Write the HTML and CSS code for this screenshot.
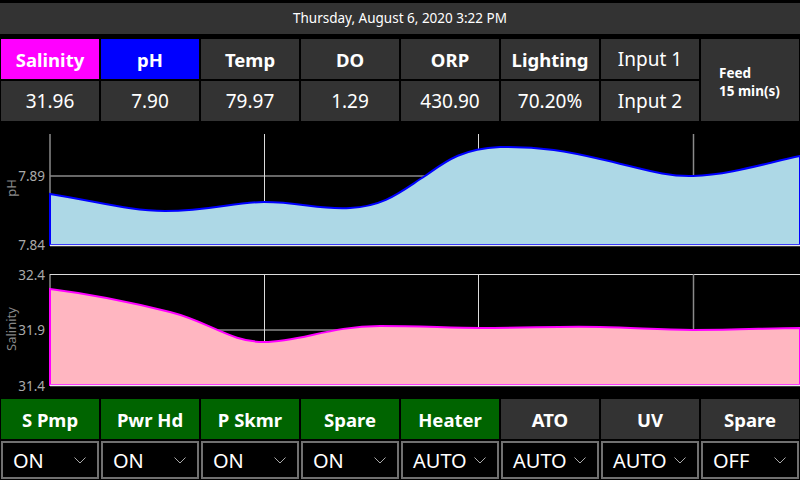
FILE: index.html
```html
<!DOCTYPE html>
<html>
<head>
<meta charset="utf-8">
<link rel="stylesheet" href="styles.css">
</head>
<body>
<div class="screen">
  <div class="header">Thursday, August 6, 2020 3:22 PM</div>

  <div class="tiles">
    <div class="tile label sal">Salinity</div>
    <div class="tile label ph">pH</div>
    <div class="tile label">Temp</div>
    <div class="tile label">DO</div>
    <div class="tile label">ORP</div>
    <div class="tile label">Lighting</div>
    <div class="tile">Input 1</div>
    <div class="tile feed"><div>Feed<br>15 min(s)</div></div>
    <div class="tile">31.96</div>
    <div class="tile">7.90</div>
    <div class="tile">79.97</div>
    <div class="tile">1.29</div>
    <div class="tile">430.90</div>
    <div class="tile">70.20%</div>
    <div class="tile">Input 2</div>
  </div>

  <div class="charts">
    <svg class="chart" width="800" height="138" viewBox="0 0 800 138">
      <text class="axis-title" transform="translate(16,66) rotate(-90)">pH</text>
      <text class="tick" x="45" y="59">7.89</text>
      <text class="tick" x="45" y="128">7.84</text>
      <line class="grid-gray" x1="50" y1="12" x2="50" y2="123"/>
      <line class="grid-gray" x1="50" y1="54" x2="800" y2="54"/>
      <line class="grid-light" x1="264.5" y1="12" x2="264.5" y2="123"/>
      <line class="grid-light" x1="478.5" y1="12" x2="478.5" y2="123"/>
      <line class="grid-gray" x1="693.5" y1="12" x2="693.5" y2="123"/>
      <path class="ph-fill" d="M50,123 L50,72 C100,80 130,89 165,89 C210,89 235,80 264,80 C300,80 320,88 350,86 C385,84 400,70 425,54 C445,40 460,27 500,25 C540,24 570,30 600,37 C640,46 665,55 693,54 C730,53 770,40 800,34 L800,123 Z"/>
      <line class="axis-bottom" x1="50" y1="123.5" x2="800" y2="123.5"/>
    </svg>
    <svg class="chart" width="800" height="138" viewBox="0 0 800 138">
      <text class="axis-title" transform="translate(16,69) rotate(-90)">Salinity</text>
      <text class="tick" x="45" y="20">32.4</text>
      <text class="tick" x="45" y="75">31.9</text>
      <text class="tick" x="45" y="131">31.4</text>
      <line class="grid-gray" x1="50" y1="14" x2="50" y2="125"/>
      <line class="grid-light" x1="50" y1="14.5" x2="800" y2="14.5"/>
      <line class="grid-gray" x1="50" y1="70" x2="800" y2="70"/>
      <line class="grid-light" x1="264.5" y1="14" x2="264.5" y2="125"/>
      <line class="grid-light" x1="478.5" y1="14" x2="478.5" y2="125"/>
      <line class="grid-gray" x1="693.5" y1="14" x2="693.5" y2="125"/>
      <path class="sal-fill" d="M50,125 L50,29 C90,34 130,42 170,52 C210,62 230,82 264,82 C300,82 330,66 380,66 C420,66 450,68 480,68 C530,68 560,66 600,67 C640,68 660,70 693,70 C740,70 770,68 800,68 L800,125 Z"/>
      <line class="axis-bottom" x1="50" y1="125.5" x2="800" y2="125.5"/>
    </svg>
  </div>

  <div class="controls">
    <div class="ctl on">S Pmp</div>
    <div class="ctl on">Pwr Hd</div>
    <div class="ctl on">P Skmr</div>
    <div class="ctl on">Spare</div>
    <div class="ctl on">Heater</div>
    <div class="ctl">ATO</div>
    <div class="ctl">UV</div>
    <div class="ctl">Spare</div>
    <div class="select"><span>ON</span><svg class="chev" width="12" height="7" viewBox="0 0 12 7"><polyline points="0.5,0.5 6,6 11.5,0.5"/></svg></div>
    <div class="select"><span>ON</span><svg class="chev" width="12" height="7" viewBox="0 0 12 7"><polyline points="0.5,0.5 6,6 11.5,0.5"/></svg></div>
    <div class="select"><span>ON</span><svg class="chev" width="12" height="7" viewBox="0 0 12 7"><polyline points="0.5,0.5 6,6 11.5,0.5"/></svg></div>
    <div class="select"><span>ON</span><svg class="chev" width="12" height="7" viewBox="0 0 12 7"><polyline points="0.5,0.5 6,6 11.5,0.5"/></svg></div>
    <div class="select"><span>AUTO</span><svg class="chev" width="12" height="7" viewBox="0 0 12 7"><polyline points="0.5,0.5 6,6 11.5,0.5"/></svg></div>
    <div class="select"><span>AUTO</span><svg class="chev" width="12" height="7" viewBox="0 0 12 7"><polyline points="0.5,0.5 6,6 11.5,0.5"/></svg></div>
    <div class="select"><span>AUTO</span><svg class="chev" width="12" height="7" viewBox="0 0 12 7"><polyline points="0.5,0.5 6,6 11.5,0.5"/></svg></div>
    <div class="select"><span>OFF</span><svg class="chev" width="12" height="7" viewBox="0 0 12 7"><polyline points="0.5,0.5 6,6 11.5,0.5"/></svg></div>
  </div>
</div>
</body>
</html>
```

FILE: styles.css
```css
html, body {
  margin: 0;
  padding: 0;
  background: #000;
}
body {
  font-family: "Noto Sans", "Open Sans", "DejaVu Sans", sans-serif;
  color: #fff;
}
.screen {
  width: 800px;
  height: 480px;
  overflow: hidden;
  display: flex;
  flex-direction: column;
}
.header {
  margin-top: 3px;
  height: 31px;
  line-height: 31px;
  background: #333;
  text-align: center;
  font-size: 13.5px;
}
.tiles {
  margin-top: 4px;
  padding: 1px;
  display: grid;
  grid-template-columns: repeat(8, 1fr);
  grid-template-rows: 40px 40px;
  gap: 2px;
}
.tile {
  background: #333;
  display: flex;
  align-items: center;
  justify-content: center;
  font-size: 19px;
}
.tile.label {
  font-weight: 700;
  font-size: 18.5px;
}
.tile.sal { background: #ff00ff; }
.tile.ph { background: #0000ff; }
.tile.feed {
  grid-column: 8;
  grid-row: 1 / span 2;
  justify-content: flex-start;
  padding-left: 18px;
  padding-top: 3px;
  font-size: 13.5px;
  font-weight: 700;
  line-height: 18px;
}
.charts {
  display: flex;
  flex-direction: column;
}
.chart {
  display: block;
}
.tick {
  fill: #aaa;
  font-size: 13.5px;
  text-anchor: end;
}
.axis-title {
  fill: #888;
  font-size: 13px;
  text-anchor: middle;
}
.grid-gray {
  stroke: #8a8a8a;
  stroke-width: 1.5;
}
.grid-light {
  stroke: #dcdcdc;
  stroke-width: 1;
}
.axis-bottom {
  stroke: #eee;
  stroke-width: 1.5;
}
.ph-fill {
  fill: #add8e6;
  stroke: #0000ff;
  stroke-width: 2;
}
.sal-fill {
  fill: #ffb6c1;
  stroke: #ff00ff;
  stroke-width: 2;
}
.controls {
  padding: 1px;
  display: grid;
  grid-template-columns: repeat(8, 1fr);
  grid-template-rows: 40px 38px;
  gap: 2px;
}
.ctl {
  background: #333;
  display: flex;
  align-items: center;
  justify-content: center;
  font-weight: 700;
  font-size: 18.5px;
}
.ctl.on { background: #006400; }
.select {
  border: 2px solid #707070;
  background: #000;
  display: flex;
  align-items: center;
  justify-content: space-between;
  padding: 0 11px 0 10px;
  font-size: 20px;
}
.chev polyline {
  fill: none;
  stroke: #aaa;
  stroke-width: 1;
}
```
